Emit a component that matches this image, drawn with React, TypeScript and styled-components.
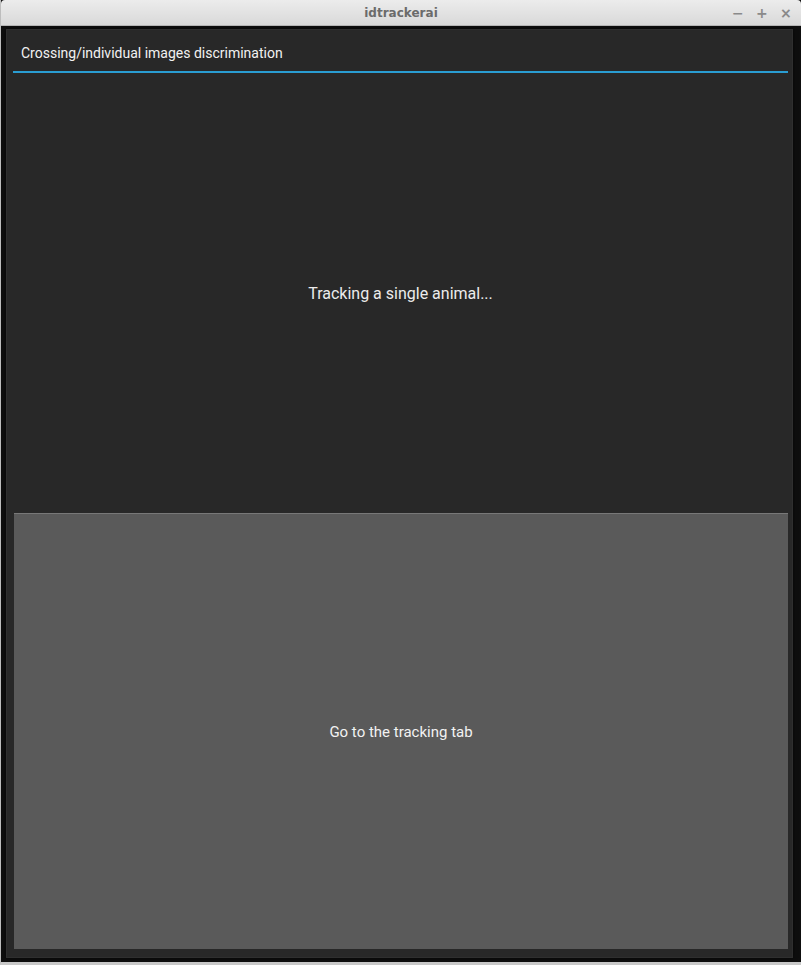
import styled, { createGlobalStyle } from 'styled-components'

const GlobalStyle = createGlobalStyle`
  html, body {
    margin: 0;
    padding: 0;
    background: #0e0e0e;
  }
  #root {
    width: 801px;
    height: 965px;
  }
`

const Window = styled.div`
  width: 801px;
  height: 965px;
  display: flex;
  flex-direction: column;
  box-sizing: border-box;
  border-left: 1px solid #bdbdbd;
  border-bottom: 3px solid #c8c8c8;
  background: #0e0e0e;
  overflow: hidden;
`

const TitleBar = styled.div`
  position: relative;
  height: 25px;
  flex-shrink: 0;
  display: flex;
  align-items: center;
  justify-content: center;
  background: linear-gradient(#ececec, #d9d9d9);
  border-bottom: 1px solid #b5b5b5;
  border-radius: 4px 4px 0 0;
`

const Title = styled.span`
  font-family: 'DejaVu Sans', sans-serif;
  font-weight: bold;
  font-size: 12px;
  color: #6b6b6b;
`

const Controls = styled.div`
  position: absolute;
  right: 10px;
  top: 0;
  height: 25px;
  display: flex;
  align-items: center;
  gap: 13px;
`

const Control = styled.span`
  font-family: 'DejaVu Sans', sans-serif;
  font-weight: bold;
  font-size: 14px;
  color: #8a8a8a;
  width: 11px;
  text-align: center;
`

const Desktop = styled.div`
  flex: 1;
  display: flex;
  padding: 3px 8px 4px 5px;
`

const Dialog = styled.div`
  flex: 1;
  display: flex;
  flex-direction: column;
  background: #282828;
  border: 1px solid #2f2f2f;
  box-shadow: 0 0 4px rgba(0, 0, 0, 0.6);
  padding: 0 4px 8px 6px;
`

const TabBar = styled.div`
  height: 41px;
  flex-shrink: 0;
  display: flex;
  align-items: flex-end;
  border-bottom: 2px solid #2a9dd2;
`

const Tab = styled.div`
  font-family: Roboto, 'Noto Sans', sans-serif;
  font-size: 14px;
  color: #f2f2f2;
  padding: 0 0 10px 8px;
`

const Body = styled.div`
  flex: 1;
  display: flex;
  flex-direction: column;
`

const Message = styled.div`
  height: 440px;
  display: flex;
  align-items: center;
  justify-content: center;
  font-family: Roboto, 'Noto Sans', sans-serif;
  font-size: 16px;
  color: #ececec;
`

const GoButton = styled.div`
  flex: 1;
  margin-left: 1px;
  display: flex;
  align-items: center;
  justify-content: center;
  background: #5a5a5a;
  border-top: 1px solid #787878;
  font-family: Roboto, 'Noto Sans', sans-serif;
  font-size: 15px;
  color: #f2f2f2;
`

export default function App() {
  return (
    <>
      <GlobalStyle />
      <Window>
        <TitleBar>
          <Title>idtrackerai</Title>
          <Controls>
            <Control>−</Control>
            <Control>+</Control>
            <Control>×</Control>
          </Controls>
        </TitleBar>
        <Desktop>
          <Dialog>
            <TabBar>
              <Tab>Crossing/individual images discrimination</Tab>
            </TabBar>
            <Body>
              <Message>Tracking a single animal...</Message>
              <GoButton>Go to the tracking tab</GoButton>
            </Body>
          </Dialog>
        </Desktop>
      </Window>
    </>
  )
}
